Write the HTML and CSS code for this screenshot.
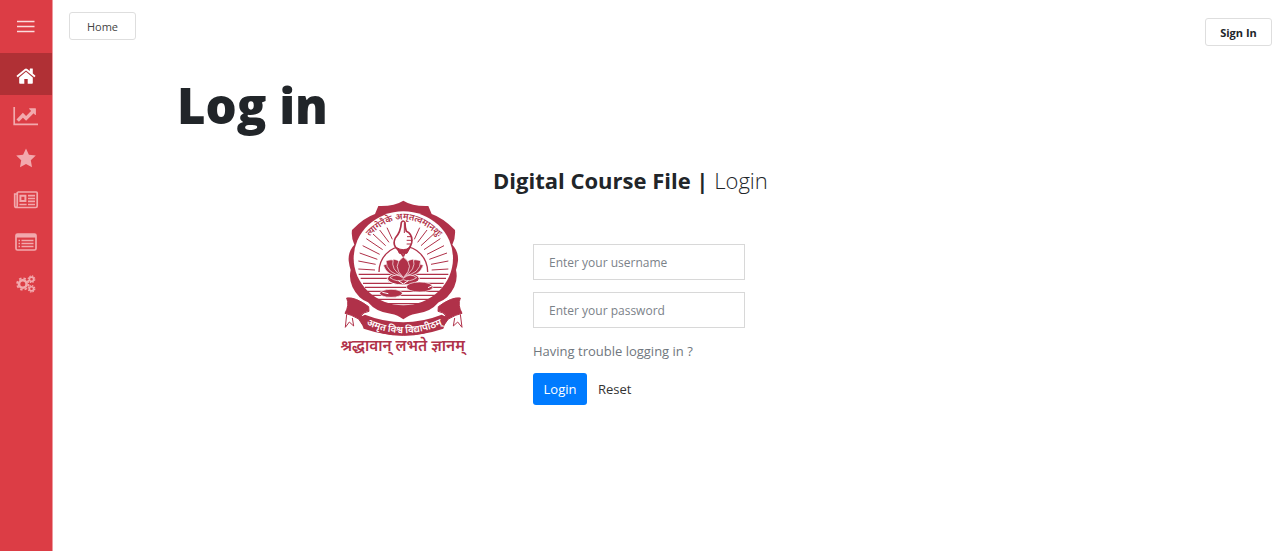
FILE: index.html
```html
<!DOCTYPE html>
<html lang="en">
<head>
<meta charset="utf-8">
<meta name="viewport" content="width=device-width, initial-scale=1">
<title>Log in</title>
<link rel="stylesheet" href="styles.css">
</head>
<body>
<nav class="sidebar" aria-label="Main">
  <button class="side-item menu" type="button" aria-label="Menu">
    <svg width="18" height="14" viewBox="0 0 18 14"><path d="M0 1.500h17.500M0 6.500h17.500M0 11.500h17.500" stroke="currentColor" stroke-width="1.300"/></svg>
  </button>
  <a class="side-item active" href="#" aria-label="Home">
    <svg width="20" height="18" viewBox="0 0 20 18" fill="currentColor"><path d="M10 4.800 3.200 10.400V16q0 .8.800.8H8.300V12h3.400v4.800H16q.8 0 .8-.8v-5.600zM19.200 8.600 16.800 6.600V1.800q0-.4-.4-.4h-2.200q-.4 0-.4.400v2.300L11.200 1.900q-1.200-.9-2.400 0L.8 8.600q-.3.300-.1.600l.7.800q.3.300.6.100L10 3.500l8 6.600q.3.200.6-.1l.7-.8q.2-.3-.1-.6z"/></svg>
  </a>
  <a class="side-item" href="#" aria-label="Statistics">
    <svg width="26" height="20" viewBox="0 0 26 20"><path d="M1.200 1v17.400H25" fill="none" stroke="currentColor" stroke-width="1.700"/><path d="m4.700 14.600 5.200-5.400 3.200 3.200L20 5.500" fill="none" stroke="currentColor" stroke-width="3.400"/><path d="M16.400 2.200h6q.5 0 .5.500v6q-.4.500-.9.100l-5.800-5.700q-.3-.6.200-.9z" fill="currentColor"/></svg>
  </a>
  <a class="side-item" href="#" aria-label="Favourites">
    <svg width="20" height="20" viewBox="0 0 20 20" fill="currentColor"><path d="m10 .5 2.900 6.200 6.900.9-5 4.700 1.200 6.900-6-3.300-6 3.300 1.200-6.900L.2 7.600l6.900-.9z"/></svg>
  </a>
  <a class="side-item" href="#" aria-label="News">
    <svg width="26" height="18" viewBox="0 0 26 18" fill="none" stroke="currentColor"><path d="M4.500 1h18.700q1 0 1 1v13q0 1.500-1.500 1.500h-19q-2 0-2-1.700V3h2.500v11.500q0 1.800-1 1.800M4.300 14V1" stroke-width="1.700"/><path d="M7.400 4.800h5v5.200h-5z" stroke-width="2"/><path d="M15 4.600h7M15 7.500h7M15 10.400h7M6.400 13.500h7.200M15 13.500h7" stroke-width="1.700"/></svg>
  </a>
  <a class="side-item" href="#" aria-label="List">
    <svg width="22" height="18" viewBox="0 0 22 18" fill="none" stroke="currentColor"><rect x="1" y="1" width="20" height="16" rx="1.500" stroke-width="1.700"/><path d="M1 2.800h20" stroke-width="3.500"/><path d="M3.500 7.500H5M6.500 7.500h12M3.500 10.500H5M6.500 10.500h12M3.500 13.500H5M6.500 13.500h12" stroke-width="1.600"/></svg>
  </a>
  <a class="side-item" href="#" aria-label="Settings">
    <svg width="20" height="18" viewBox="0 0 20 18" fill="none" stroke="currentColor"><circle cx="6.800" cy="9" r="3.800" stroke-width="2.600"/><circle cx="6.800" cy="9" r="5.700" stroke-width="1.800" stroke-dasharray="2.400 2.077"/><circle cx="15.500" cy="4.200" r="2.100" stroke-width="1.600"/><circle cx="15.500" cy="4.200" r="3.300" stroke-width="1.200" stroke-dasharray="1.500 1.092"/><circle cx="15.500" cy="13.800" r="2.100" stroke-width="1.600"/><circle cx="15.500" cy="13.800" r="3.300" stroke-width="1.200" stroke-dasharray="1.500 1.092"/></svg>
  </a>
</nav>
<div class="page">
  <header class="topbar">
    <a class="top-link home" href="#">Home</a>
    <a class="top-link sign-in" href="#">Sign In</a>
  </header>
  <main class="content">
    <h1>Log in</h1>
    <section class="login">
      <svg class="crest" viewBox="15 24 408 486" role="img" aria-label="University crest">
        <defs>
          <path id="motto-arc" d="M98 162Q220 14 346 164"/>
          <path id="ribbon-arc" d="M90 395Q220 464 356 395"/>
        </defs>
        <g fill="#b03149">
          <path d="M220 32Q249 50 295 48L305 72Q338 83 375 120Q377 144 367 164Q386 184 384 212Q382 228 378 240Q388 282 351 322Q339 333 326 337Q300 368 258 371Q236 375 220 388Q204 375 182 371Q140 368 114 337Q101 333 89 322Q52 282 62 240Q58 228 56 212Q54 184 73 164Q63 144 66 120Q102 83 135 72L145 48Q191 50 220 32Z"/>
          <ellipse cx="220" cy="205" rx="149" ry="141" fill="#fff"/>
          <path d="M50 324Q76 320 116 350L117 364Q99 366 92 379Q155 412 220 412Q286 412 349 379Q342 366 324 364L325 350Q365 320 391 324Q382 345 396 370Q379 373 355 387L342 405Q285 437 220 436Q155 437 98 405L86 387Q62 373 45 370Q59 345 50 324Z" stroke="#b03149" stroke-width="3"/>
          <path d="M105 374Q220 419 335 374L352 382L340 416Q220 456 101 416L88 382Z"/>
        </g>
        <g fill="none" stroke="#b03149" stroke-width="3">
          <path d="M50 373 46 412 58 396 71 408 67 384M391 373 396 412 383 396 370 408 374 384"/>
          <path d="M147 246A73 77 0 0 1 293 246" stroke-width="4"/>
          <path d="M85 237 135 240M85 213 137 223M89 189 142 208M98 167 149 193M109 146 158 179M129 132 167 167M149 120 177 157M171 113 187 148M355 237 305 240M355 213 303 223M351 189 298 208M342 167 291 193M331 146 282 179M311 132 273 167M291 120 263 157M269 113 253 148"/>
        </g>
        <path d="M214 98Q219 88 225 98Q225 113 229 124Q249 133 245 158Q240 176 228 181L220 199 207 181Q185 167 196 144Q212 127 214 98Z" fill="#fff" stroke="#b03149" stroke-width="5"/>
        <path d="M200 173Q219 185 240 173L231 190H208ZM223 99V129M231 140H243M230 151H247M230 162H242" fill="#b03149" stroke="#b03149" stroke-width="3"/>
        <path d="M86 253H355M92 265H348M99 280H341M105 292H335M112 304H328M124 316H316M138 328H302M163 341H277" stroke="#b03149" stroke-width="4"/>
        <ellipse cx="220" cy="266" rx="48" ry="19" fill="#b03149" stroke="#fff" stroke-width="3"/>
        <g fill="#b03149" stroke="#fff" stroke-width="2">
          <path d="M160 226Q181 214 198 234L217 259Q172 261 160 226ZM280 226Q259 214 242 234L223 259Q268 261 280 226Z"/>
          <path d="M168 212Q201 202 211 229L220 258Q169 252 168 212ZM272 212Q239 202 229 229L220 258Q271 252 272 212Z"/>
          <path d="M190 207Q218 211 218 240L220 260Q180 240 190 207ZM250 207Q222 211 222 240L220 260Q260 240 250 207Z"/>
          <path d="M220 201Q257 226 220 263Q183 226 220 201Z"/>
          <path d="M180 263Q199 247 220 265Q241 247 260 263Q238 278 220 269Q202 278 180 263Z"/>
          <ellipse cx="183" cy="310" rx="34" ry="12"/>
          <ellipse cx="269" cy="291" rx="40" ry="15"/>
        </g>
        <path d="M157 307 175 311M294 293 311 285M205 272 220 282 235 272" fill="none" stroke="#fff" stroke-width="3"/>
        <text class="motto" text-anchor="middle"><textPath href="#motto-arc" startOffset="50%">त्यागेनैके अमृतत्वमानशुः</textPath></text>
        <text class="ribbon" text-anchor="middle"><textPath href="#ribbon-arc" startOffset="50%">अमृत विश्व विद्यापीठम्</textPath></text>
        <text class="crest-name" x="218" y="483" text-anchor="middle">श्रद्धावान् लभते ज्ञानम्</text>
      </svg>
      <h2><strong>Digital Course File |</strong> Login</h2>
      <form class="login-form">
        <input type="text" aria-label="Username" placeholder="Enter your username">
        <input type="password" aria-label="Password" placeholder="Enter your password">
        <a class="help" href="#">Having trouble logging in ?</a>
        <div class="actions">
          <button class="submit" type="submit">Login</button>
          <button class="reset" type="reset">Reset</button>
        </div>
      </form>
    </section>
  </main>
</div>
</body>
</html>
```
FILE: styles.css
```css
* { box-sizing: border-box; }

body {
  margin: 0;
  min-height: 100vh;
  display: flex;
  background: #fff;
  color: #212529;
  font-family: "Open Sans", "Noto Sans", sans-serif;
  font-size: 13px;
}

a { color: inherit; text-decoration: none; }

button, input { font: inherit; }

.sidebar {
  flex: 0 0 53px;
  display: flex;
  flex-direction: column;
  background: #dc3d45;
  border-right: 1px solid #ee9a9f;
}

.side-item {
  height: 42px;
  display: flex;
  align-items: center;
  justify-content: center;
  padding: 0;
  border: 0;
  background: none;
  color: #f2a9ad;
}

.menu { height: 53px; color: #fbdcdd; }

.active { background: #b03035; color: #fff; padding-top: 3px; }

.page { flex: 1; min-width: 0; }

.topbar {
  display: flex;
  justify-content: space-between;
  align-items: flex-start;
  padding: 12px 8px 0 16px;
}

.top-link {
  height: 28px;
  width: 67px;
  display: flex;
  align-items: center;
  justify-content: center;
  border: 1px solid #dedede;
  border-radius: 3px;
  font-size: 11px;
}

.home { color: #444; }

.sign-in { margin-top: 6px; font-weight: 700; }

.content { padding: 24px 24px 24px 124px; }

h1 {
  margin: 0;
  font-size: 49px;
  font-weight: 800;
  line-height: 70px;
}

.login {
  display: grid;
  grid-template-columns: 136px minmax(0, 272px);
  column-gap: 22px;
  padding: 22px 0 0 158px;
}

.crest {
  grid-row: 1 / 3;
  width: 136px;
  margin-top: 36px;
}

h2 {
  margin: 0;
  font-size: 22px;
  font-weight: 300;
  line-height: 36px;
  white-space: nowrap;
}

h2 strong { font-weight: 700; }

.login-form {
  display: flex;
  flex-direction: column;
  align-items: flex-start;
  width: 212px;
  margin: 46px 0 0 40px;
}

.login-form input {
  width: 100%;
  height: 36px;
  margin-bottom: 12px;
  padding: 0 15px;
  border: 1px solid #d8d8d8;
  color: #495057;
  font-size: 12px;
}

.login-form input::placeholder { color: #7b8289; opacity: 1; }

.help { color: #70777e; line-height: 22px; }

.actions { display: flex; gap: 11px; margin-top: 11px; }

.actions button {
  height: 32px;
  border: 0;
  padding: 0;
  background: none;
}

.actions .submit {
  width: 54px;
  border-radius: 3px;
  background: #007bff;
  color: #fff;
}

.actions .reset { color: #333; }

.crest text {
  font-family: "Noto Sans Devanagari", "Noto Sans", "Open Sans", sans-serif;
  font-weight: 600;
  fill: #b03149;
}

.crest .motto { font-size: 27px; }

.crest .ribbon { font-size: 29px; fill: #fff; }

.crest .crest-name { font-size: 46px; }
```
